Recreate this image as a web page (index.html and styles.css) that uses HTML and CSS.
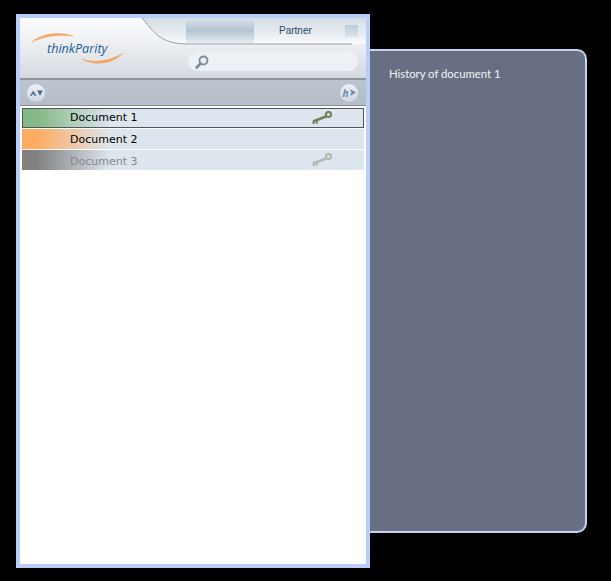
FILE: index.html
```html
<!DOCTYPE html>
<html>
<head>
  <title>thinkParity</title>
  <link rel="stylesheet" href="styles.css">
</head>
<body>
  <div class="app">
    <div class="main">
      <div class="header">
        <svg class="tab" width="346" height="60" viewBox="0 0 346 60">
          <defs>
            <linearGradient id="tabfill" x1="0" y1="0" x2="0" y2="1">
              <stop offset="0" stop-color="#d5dee5"/>
              <stop offset="0.5" stop-color="#e4e9ee"/>
              <stop offset="1" stop-color="#fafbfc"/>
            </linearGradient>
          </defs>
          <path d="M122 0 C134 14 140 26 168 26 L346 26 L346 0 Z" fill="url(#tabfill)"/>
          <path d="M122 0 C134 14 140 26 168 26 L332 26" fill="none" stroke="#9b9fa6" stroke-width="1"/>
        </svg>
        <div class="logo">
          <svg class="swoosh" width="100" height="36" viewBox="0 0 100 36">
            <path d="M2 10 C11 2 28 -1 43 4 C28 2 12 5 2 10 Z" fill="#f2a45c" stroke="#f2a45c" stroke-width="0.5"/>
            <path d="M52 27 C66 32 82 28 93 21 C84 31 66 35 52 27 Z" fill="#f2a45c" stroke="#f2a45c" stroke-width="0.5"/>
          </svg>
          <span class="logo-text">thinkParity</span>
        </div>
        <div class="header-right">
          <div class="tabs">
            <div class="tab-dark"></div>
            <div class="tab-name">Partner</div>
            <div class="tab-small"></div>
          </div>
          <div class="search">
            <svg width="16" height="16" viewBox="0 0 16 16">
              <circle cx="9.5" cy="6.5" r="4" fill="none" stroke="#7d8a96" stroke-width="1.8"/>
              <path d="M6.6 9.5 L2.6 13.5" stroke="#7d8a96" stroke-width="2.6" stroke-linecap="round"/>
            </svg>
          </div>
        </div>
      </div>
      <div class="toolbar">
        <div class="round-btn">
          <svg width="13" height="6" viewBox="0 0 14 8" preserveAspectRatio="none">
            <path d="M3.5 0.5 L7 7.5 L4.8 7.5 L4.2 5.8 L2.6 5.8 L2 7.5 L0 7.5 Z" fill="#4d6a90"/>
            <path d="M7.5 0.5 L14 0.5 L10.8 7.5 Z" fill="#4d6a90"/>
          </svg>
        </div>
        <div class="round-btn">
          <span class="h-mark">h</span><svg width="6" height="7" viewBox="0 0 6 7"><path d="M0 0 L6 3.5 L0 7 L1.5 3.5 Z" fill="#6d86a6"/></svg>
        </div>
      </div>
      <div class="list">
        <div class="row row-green selected">
          <span class="name">Document 1</span>
          <svg class="key" width="22" height="14" viewBox="0 0 22 14">
            <circle cx="17.5" cy="3.5" r="2.6" fill="none" stroke="#6f8357" stroke-width="2"/>
            <path d="M15 5.5 L2 10.5" stroke="#6f8357" stroke-width="2.8"/>
            <path d="M5 10 L6.5 12.5 M2 10.5 L3 13" stroke="#6f8357" stroke-width="2"/>
          </svg>
        </div>
        <div class="row row-orange">
          <span class="name">Document 2</span>
        </div>
        <div class="row row-grey">
          <span class="name">Document 3</span>
          <svg class="key" width="22" height="14" viewBox="0 0 22 14">
            <circle cx="17.5" cy="3.5" r="2.6" fill="none" stroke="#b4b8b4" stroke-width="2"/>
            <path d="M15 5.5 L2 10.5" stroke="#b4b8b4" stroke-width="2.8"/>
            <path d="M5 10 L6.5 12.5 M2 10.5 L3 13" stroke="#b4b8b4" stroke-width="2"/>
          </svg>
        </div>
      </div>
    </div>
    <div class="history">History of document 1</div>
  </div>
</body>
</html>
```

FILE: styles.css
```css
body {
  margin: 0;
  background-color: #000;
  font-family: "Liberation Sans", Arial, sans-serif;
}

.app {
  display: flex;
  align-items: flex-start;
  padding: 14px 0 0 16px;
}

.main {
  box-sizing: border-box;
  width: 354px;
  height: 554px;
  border: 4px solid #b9cdfb;
  background-color: #fff;
}

.header {
  position: relative;
  display: flex;
  height: 60px;
  background: linear-gradient(#fdfdfe, #f0f2f5 35%, #d5d9df);
  border-bottom: 2px solid #8f9296;
}

.tab {
  position: absolute;
  top: 0;
  left: 0;
}

.logo {
  position: relative;
  width: 166px;
  flex: none;
}

.swoosh {
  position: absolute;
  top: 14px;
  left: 10px;
}

.logo-text {
  position: absolute;
  top: 22px;
  left: 27px;
  font-family: "Open Sans", sans-serif;
  font-style: italic;
  font-size: 12.6px;
  color: #1d5a96;
}

.header-right {
  position: relative;
  flex: 1;
}

.tabs {
  display: flex;
  align-items: flex-start;
  height: 34px;
}

.tab-dark {
  width: 68px;
  height: 25px;
  background: linear-gradient(#dbe3ea, #b4c4d2 50%, #e6ebf0);
}

.tab-name {
  box-sizing: border-box;
  width: 91px;
  height: 25px;
  padding-left: 25px;
  line-height: 25px;
  font-size: 10px;
  color: #2a4463;
}

.tab-small {
  width: 13px;
  height: 12px;
  margin-top: 7px;
  background: linear-gradient(#bccad6, #dde4ea);
}

.search {
  display: flex;
  align-items: center;
  box-sizing: border-box;
  width: 170px;
  height: 19px;
  margin-left: 2px;
  padding-left: 6px;
  background-color: #edf0f4;
  border-radius: 10px;
}

.toolbar {
  display: flex;
  justify-content: space-between;
  align-items: center;
  box-sizing: border-box;
  height: 26px;
  padding: 0 8px 0 7px;
  background: linear-gradient(#bcc5cf, #b4bdc8);
  border-bottom: 1px solid #85898e;
}

.round-btn {
  display: flex;
  justify-content: center;
  align-items: center;
  gap: 1px;
  width: 18px;
  height: 18px;
  border-radius: 50%;
  background: linear-gradient(#eef1f5, #cfd7e1);
}

.h-mark {
  font-family: "Open Sans", sans-serif;
  font-style: italic;
  font-weight: 700;
  font-size: 10px;
  color: #6d86a6;
}

.list {
  display: flex;
  flex-direction: column;
  gap: 1px;
  padding: 2px 2px 0 2px;
}

.row {
  display: flex;
  justify-content: space-between;
  align-items: center;
  box-sizing: border-box;
  height: 20px;
  padding: 0 31px 0 48px;
  font-family: "DejaVu Sans", sans-serif;
  font-size: 11px;
  color: #000;
}

.row-green {
  background: linear-gradient(90deg, #84b985 14px, #dde5ee 88px);
}

.row-orange {
  background: linear-gradient(90deg, #ffab60 14px, #dde5ee 88px);
}

.row-grey {
  background: linear-gradient(90deg, #808080 14px, #dde5ee 88px);
  color: #85878a;
}

.row-green .name {
  margin-bottom: 2px;
}

.row-grey .name {
  margin-top: 2px;
}

.selected {
  border: 1px solid #50565a;
  padding: 0 30px 0 47px;
}

.history {
  box-sizing: border-box;
  width: 217px;
  height: 484px;
  margin-top: 35px;
  padding: 16px 0 0 19px;
  background-color: #696f82;
  border: 2px solid #c6d4f0;
  border-left: 0;
  border-radius: 0 10px 10px 0;
  font-family: Lato, sans-serif;
  font-size: 11.3px;
  color: #f2f3f5;
}
```
